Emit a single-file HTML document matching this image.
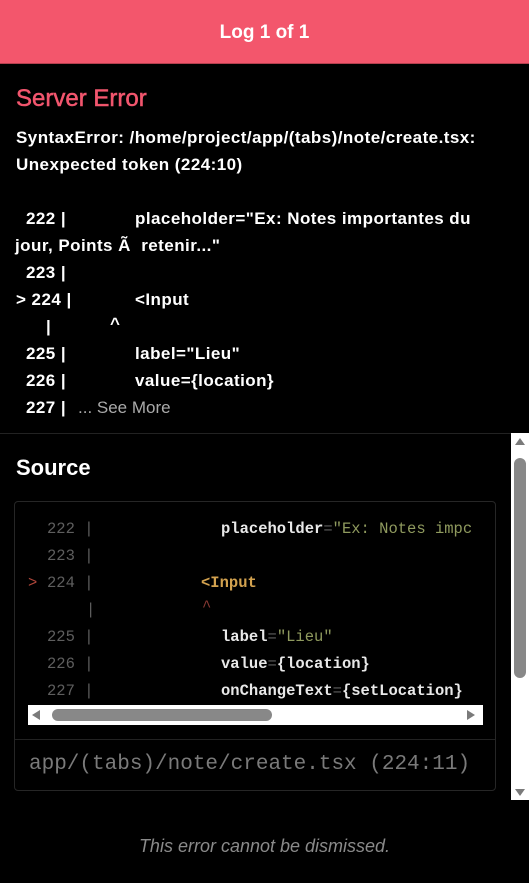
<!DOCTYPE html>
<html><head><style>
*{margin:0;padding:0;box-sizing:border-box}
body{width:529px;height:883px;background:#000;position:relative;overflow:hidden;font-family:"Liberation Sans",sans-serif;color:#fff}
.a{position:absolute;white-space:pre}
.hdr{position:absolute;left:0;top:0;width:529px;height:64px;background:#f3566c;border-bottom:1px solid #b5404f;text-align:center;line-height:66px;font-size:19px;font-weight:bold}
.b{font-weight:bold;font-size:17px;letter-spacing:0.45px}
.m{font-family:"Liberation Mono",monospace;font-size:15.5px}
.n{color:#5e5e5e}
.w{color:#e8e8e8;font-weight:bold}
.s{color:#8f9a5e}
.o{color:#d3a24f}
</style></head><body>
<div class="hdr">Log 1 of 1</div>
<div class="a" style="left:16px;top:85px;font-size:24px;color:#f2566e;-webkit-text-stroke:0.5px #f2566e">Server Error</div>
<div class="a b" style="left:16px;top:128px">SyntaxError: /home/project/app/(tabs)/note/create.tsx:</div>
<div class="a b" style="left:16px;top:155px">Unexpected token (224:10)</div>
<div class="a b" style="left:26px;top:209px">222 |</div><div class="a b" style="left:135px;top:209px">placeholder="Ex: Notes importantes du</div>
<div class="a b" style="left:15px;top:236px">jour, Points Ã  retenir..."</div>
<div class="a b" style="left:26px;top:263px">223 |</div>
<div class="a b" style="left:16px;top:290px">&gt; 224 |</div><div class="a b" style="left:135px;top:290px">&lt;Input</div>
<div class="a b" style="left:46px;top:317px">|</div><div class="a b" style="left:110px;top:314px">^</div>
<div class="a b" style="left:26px;top:344px">225 |</div><div class="a b" style="left:135px;top:344px">label="Lieu"</div>
<div class="a b" style="left:26px;top:371px">226 |</div><div class="a b" style="left:135px;top:371px">value={location}</div>
<div class="a b" style="left:26px;top:398px">227 |</div><div class="a" style="left:78px;top:398px;font-size:17px;color:#aaa">... See More</div>
<div class="a" style="left:0;top:433px;width:529px;height:1px;background:#222"></div>
<div class="a" style="left:16px;top:455px;font-size:22px;font-weight:bold">Source</div>
<div class="a" style="left:14px;top:501px;width:482px;height:290px;border:1px solid #262626;border-radius:4px"></div>
<div class="a m n" style="left:47px;top:520px">222 |</div><div class="a m" style="left:221px;top:520px"><span class="w">placeholder</span><span class="n">=</span><span class="s">"Ex: Notes impc</span></div>
<div class="a m n" style="left:47px;top:547px">223 |</div>
<div class="a m" style="left:28px;top:574px;color:#b0463a">&gt;</div><div class="a m n" style="left:47px;top:574px">224 |</div><div class="a m o" style="left:201px;top:574px;font-weight:bold">&lt;Input</div>
<div class="a m n" style="left:86px;top:601px">|</div><div class="a m" style="left:202px;top:598px;color:#8b3a34">^</div>
<div class="a m n" style="left:47px;top:628px">225 |</div><div class="a m" style="left:221px;top:628px"><span class="w">label</span><span class="n">=</span><span class="s">"Lieu"</span></div>
<div class="a m n" style="left:47px;top:655px">226 |</div><div class="a m" style="left:221px;top:655px"><span class="w">value</span><span class="n">=</span><span class="w">{location}</span></div>
<div class="a m n" style="left:47px;top:682px">227 |</div><div class="a m" style="left:221px;top:682px"><span class="w">onChangeText</span><span class="n">=</span><span class="w">{setLocation}</span></div>
<div class="a" style="left:28px;top:705px;width:455px;height:20px;background:#fff"></div>
<div class="a" style="left:32px;top:710px;width:0;height:0;border-top:5px solid transparent;border-bottom:5px solid transparent;border-right:8px solid #7a7a7a"></div>
<div class="a" style="left:52px;top:709px;width:220px;height:12px;background:#888;border-radius:6px"></div>
<div class="a" style="left:467px;top:710px;width:0;height:0;border-top:5px solid transparent;border-bottom:5px solid transparent;border-left:8px solid #7a7a7a"></div>
<div class="a" style="left:15px;top:739px;width:480px;height:1px;background:#222"></div>
<div class="a" style="left:29px;top:753px;font-family:'Liberation Mono',monospace;font-size:21px;color:#7a7a7a">app/(tabs)/note/create.tsx (224:11)</div>
<div class="a" style="left:511px;top:433px;width:18px;height:367px;background:#fff"></div>
<div class="a" style="left:515px;top:438px;width:0;height:0;border-left:5px solid transparent;border-right:5px solid transparent;border-bottom:7px solid #7a7a7a"></div>
<div class="a" style="left:514px;top:458px;width:12px;height:220px;background:#888;border-radius:6px"></div>
<div class="a" style="left:515px;top:789px;width:0;height:0;border-left:5px solid transparent;border-right:5px solid transparent;border-top:7px solid #7a7a7a"></div>
<div class="a" style="left:0;top:836px;width:529px;text-align:center;font-size:18px;font-style:italic;color:#8a8a8a">This error cannot be dismissed.</div>
</body></html>
